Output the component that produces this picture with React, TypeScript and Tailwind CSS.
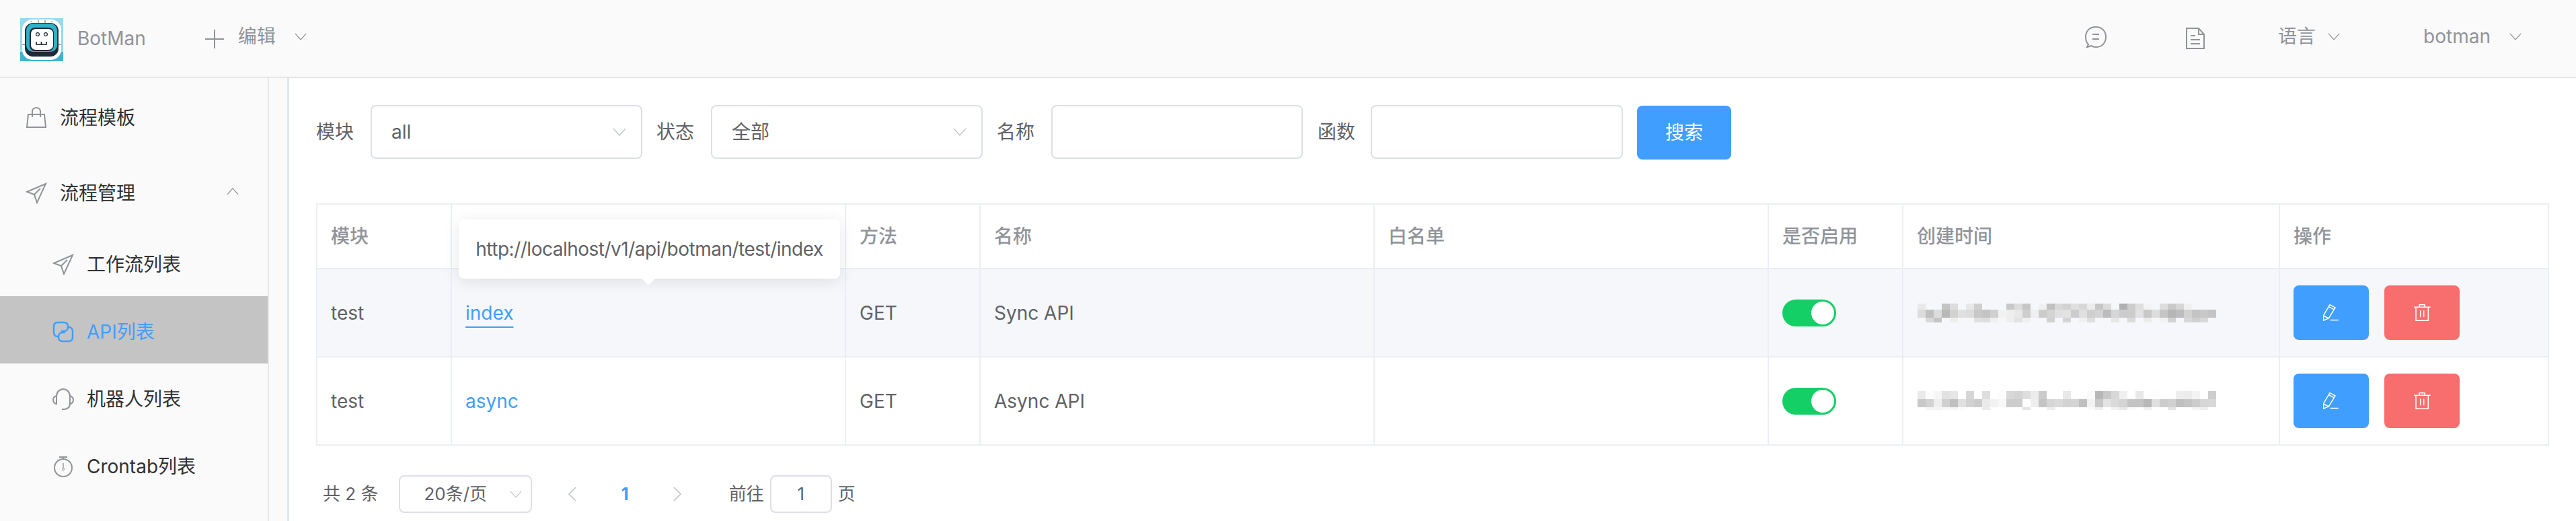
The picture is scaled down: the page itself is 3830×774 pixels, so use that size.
import type { ReactNode } from "react";

const mosaics = [
  {
    rows: [
      { y: 1, h: 9, cells: "e9 -- -- c4 dc -- e8 cf -- -- -- c9 dd c6 -- f0 c0 d8 d2 e0 d8 eb c6 dc -- b0 cc df f3 -- de c9 d6 f0 -- -- --" },
      { y: 10, h: 12, cells: "dc c0 dc b8 d2 e0 dc c8 c4 d0 f2 ee e8 ce f0 cc d4 e0 e2 cc e0 cf d4 bc d6 cc cc e2 c8 dd c6 b6 bc d2 c4 c8 c4" },
      { y: 22, h: 7, cells: "-- d8 c4 -- ee -- -- e0 de f0 -- ee e2 f0 -- -- d0 -- d4 -- f0 de -- -- e6 -- da -- ec -- f2 d2 -- d8 d0 d8 --" },
    ],
  },
  {
    rows: [
      { y: 0, h: 12, cells: "ea fd f6 e2 e6 -- d6 -- de -- fc d8 d4 de ec cb -- -- e8 -- -- fa b8 c8 d8 f0 -- e8 -- fd -- -- ee ec f4 -- cd" },
      { y: 12, h: 12, cells: "c8 d2 ee d0 c0 e0 d2 cc ea f2 f8 cc cc ff ee c4 d6 da d2 d4 c0 f2 c8 e4 da d4 c4 c4 b8 e0 cc d0 bf c4 cc d6 d8" },
      { y: 24, h: 4, cells: "-- f6 f4 f8 f6 fb -- -- ec -- -- -- -- e4 -- -- ee -- -- -- -- fa f0 -- f2 e8 fa -- f2 -- -- e4 -- -- f6 f0 --" },
    ],
  },
];

const rows = [
  { module: "test", path: "index", name: "Sync API", mosaic: 0, hovered: true },
  { module: "test", path: "async", name: "Async API", mosaic: 1, hovered: false },
];

const columns = [
  { title: "模块", width: "w-[200px]" },
  { title: "", width: "w-[586px]" },
  { title: "方法", width: "w-[200px]" },
  { title: "名称", width: "w-[586px]" },
  { title: "白名单", width: "w-[586px]" },
  { title: "是否启用", width: "w-[200px]" },
  { title: "创建时间", width: "w-[560px]" },
  { title: "操作", width: "w-[400px]" },
];

function Stroke({ size, children, className }: { size: number; children: ReactNode; className?: string }) {
  return (
    <svg
      width={size}
      height={size}
      viewBox="0 0 32 32"
      fill="none"
      stroke="currentColor"
      strokeWidth="2"
      className={`shrink-0 ${className ?? ""}`}
    >
      {children}
    </svg>
  );
}

function Chevron({ w = 18, up = false, className }: { w?: number; up?: boolean; className?: string }) {
  return (
    <svg width={w} height={w * 0.6} viewBox="0 0 20 12" fill="none" stroke="currentColor" strokeWidth="1.4" className={`shrink-0 ${className ?? ""}`}>
      <polyline points={up ? "1,11 10,1 19,11" : "1,1 10,11 19,1"} />
    </svg>
  );
}

function BagIcon() {
  return (
    <Stroke size={32}>
      <path d="M4 11h24l2 19H2z" />
      <path d="M10 15V6a6 5 0 0 1 12 0v9" />
    </Stroke>
  );
}

function SendIcon() {
  return (
    <Stroke size={32}>
      <path d="M30 2L2 14l11 4 4 12z" />
      <path d="M22 9l-9 9" />
    </Stroke>
  );
}

function LinkIcon() {
  return (
    <Stroke size={32}>
      <path d="M8 23c-4 0-6-3-6-6V8c0-4 2-6 6-6h9c4 0 6 2 6 6v1c0 3-2 6-6 6h-4" strokeWidth="2.5" />
      <path d="M24 9c4 0 6 3 6 6v9c0 4-2 6-6 6h-9c-4 0-6-2-6-6v-1c0-3 2-6 6-6h4" strokeWidth="2.5" />
    </Stroke>
  );
}

function HeadsetIcon() {
  return (
    <Stroke size={32}>
      <path d="M6 12C6 6 10 1 16 1s10 5 10 11" />
      <path d="M6 11c-3 1-5 3-5 6s2 6 5 6z" />
      <path d="M26 11c3 1 5 3 5 6s-2 6-5 6z" />
      <path d="M26 23c0 5-4 8-9 8h-3" />
    </Stroke>
  );
}

function WatchIcon() {
  return (
    <Stroke size={32}>
      <circle cx="16" cy="18" r="13" />
      <path d="M10 2h12M16 2v3" />
      <path d="M16 11v7" strokeWidth="1.4" />
      <circle cx="16" cy="20" r="1.6" strokeWidth="1" />
    </Stroke>
  );
}

function Logo() {
  return (
    <svg width="64" height="64" viewBox="0 0 64 64" className="mt-1 shrink-0">
      <rect width="64" height="50" fill="#93dcef" />
      <rect y="50" width="64" height="14" fill="#3fb2cf" />
      <rect x="3" y="2" width="58" height="60" rx="15" fill="#fff" />
      <path d="M3 39h58" stroke="#1f2937" strokeWidth="0.8" />
      <path d="M27 3v4M37 3v4" stroke="#374151" strokeWidth="0.8" />
      <circle cx="17" cy="5" r="1" fill="#67c9df" />
      <circle cx="47" cy="5" r="1" fill="#67c9df" />
      <rect x="7" y="7" width="50" height="50" rx="12" fill="#1f2937" />
      <rect x="9" y="8" width="46" height="42" rx="10" fill="#2fb2c9" />
      <rect x="14" y="14" width="36" height="35" rx="8" fill="#1f2937" />
      <rect x="16" y="16" width="33" height="31" rx="7" fill="#fff" />
      <circle cx="26" cy="24" r="2.4" fill="#fff" stroke="#1f2937" strokeWidth="1.2" />
      <circle cx="38" cy="24" r="2.4" fill="#fff" stroke="#1f2937" strokeWidth="1.2" />
      <path d="M24 35v4h15v-4M31.5 35v4" fill="none" stroke="#111827" strokeWidth="1.6" />
    </svg>
  );
}

function Mosaic({ index }: { index: number }) {
  return (
    <svg width="444" height="30" className="ml-px block">
      {mosaics[index].rows.map((row) =>
        row.cells.split(" ").map((cell, col) =>
          cell === "--" ? null : (
            <rect key={`${row.y}-${col}`} x={col * 12} y={row.y} width="12" height={row.h} fill={`#${cell}${cell}${cell}`} />
          ),
        ),
      )}
    </svg>
  );
}

function Select({ value, className }: { value: string; className: string }) {
  return (
    <div className={`flex items-center justify-between rounded-lg border-2 border-[#dcdfe6] bg-white ${className}`}>
      <span>{value}</span>
      <Chevron w={20} className="text-[#c0c4cc]" />
    </div>
  );
}

function MenuItem({ icon, label, active }: { icon: ReactNode; label: string; active?: boolean }) {
  return (
    <div
      className={`flex h-[100px] items-center gap-[19px] pl-[78px] pt-[6px] ${active ? "bg-[#c4c4c4] text-[#409eff]" : "text-[#303133]"}`}
    >
      <span className={active ? "text-[#409eff]" : "text-[#909399]"}>{icon}</span>
      <span>{label}</span>
    </div>
  );
}

export default function App() {
  return (
    <div className="flex h-[774px] w-[3830px] flex-col overflow-hidden bg-white text-[28px] leading-[40px] [font-family:Inter,'Noto_Sans_CJK_SC',sans-serif]">
      <header className="flex h-[116px] shrink-0 items-center border-b-2 border-[#e6e6e6] bg-[#fafafa] pl-[30px] pr-[81px] text-[#909399]">
        <Logo />
        <span className="ml-[21px]">BotMan</span>
        <div className="mb-[6px] ml-[86px] flex items-center">
          <Stroke size={32} className="mt-[8px]">
            <path d="M16 2v28M2 16h28" />
          </Stroke>
          <span className="ml-[19px]">编辑</span>
          <Chevron className="ml-7" />
        </div>
        <div className="mb-[6px] ml-auto flex items-center">
          <Stroke size={32} className="mt-[2px]">
            <path d="M5 27C2 24 1 20 1 16 1 7 7 1 16 1s15 6 15 15-6 15-15 15c-3 0-5-1-7-2-2 1-4 1.500-6 2z" />
            <path d="M11 12h10M11 19h10" />
          </Stroke>
          <Stroke size={32} className="ml-[116px] mt-[6px]">
            <path d="M3 1h18l8 9v21H3z" />
            <path d="M21 1v9h8M9 12h7M9 18h14M9 24h14" />
          </Stroke>
          <span className="ml-[107px]">语言</span>
          <Chevron className="ml-[18px]" />
          <span className="ml-[124px]">botman</span>
          <Chevron className="ml-7" />
        </div>
      </header>

      <div className="flex min-h-0 flex-1">
        <aside className="w-[400px] shrink-0 border-r-2 border-[#e6e6e6] bg-[#fafafa] pt-[3px] text-[#303133]">
          <div className="flex h-[112px] items-center gap-[19px] pl-[38px]">
            <span className="text-[#909399]">
              <BagIcon />
            </span>
            <span>流程模板</span>
          </div>
          <div className="flex h-[109px] items-center gap-[19px] pl-[38px] pt-[3px]">
            <span className="text-[#909399]">
              <SendIcon />
            </span>
            <span>流程管理</span>
            <Chevron up className="mb-[6px] ml-[117px] text-[#909399]" />
          </div>
          <MenuItem icon={<SendIcon />} label="工作流列表" />
          <MenuItem icon={<LinkIcon />} label="API列表" active />
          <MenuItem icon={<HeadsetIcon />} label="机器人列表" />
          <MenuItem icon={<WatchIcon />} label="Crontab列表" />
        </aside>
        <div className="w-[27px] shrink-0 bg-[#fafafa]" />

        <main className="min-w-0 flex-1 border-l-[3px] border-[#dfe6ec] pl-10 pr-10 pt-10 text-[#606266]">
          <div className="flex items-start">
            <div className="flex h-[80px] items-center">
              <span className="mr-[25px]">模块</span>
              <Select value="all" className="h-[80px] w-[404px] pl-[29px] pr-[22px]" />
              <span className="ml-[21px] mr-[25px]">状态</span>
              <Select value="全部" className="h-[80px] w-[404px] pl-[29px] pr-[22px]" />
              <span className="ml-[21px] mr-[25px]">名称</span>
              <input readOnly className="h-[80px] w-[374px] rounded-lg border-2 border-[#dcdfe6] bg-white" />
              <span className="ml-[22px] mr-[23px]">函数</span>
              <input readOnly className="h-[80px] w-[375px] rounded-lg border-2 border-[#dcdfe6] bg-white" />
            </div>
            <button className="ml-[21px] mt-px h-[80px] w-[140px] rounded-lg bg-[#409eff] text-white">搜索</button>
          </div>

          <table className="mt-[65px] w-[3320px] table-fixed border-separate border-spacing-0 border-l-2 border-t-2 border-[#ebeef5]">
            <colgroup>
              {columns.map((col, i) => (
                <col key={i} className={col.width} />
              ))}
            </colgroup>
            <thead>
              <tr className="h-[96px]">
                {columns.map((col, i) => (
                  <th
                    key={i}
                    className="border-b-2 border-r-2 border-[#ebeef5] pl-5 text-left font-medium text-[#909399]"
                  >
                    {col.title}
                  </th>
                ))}
              </tr>
            </thead>
            <tbody>
              {rows.map((row) => (
                <tr key={row.path} className={`h-[131px] ${row.hovered ? "bg-[#f5f7fa]" : ""}`}>
                  <td className="border-b-2 border-r-2 border-[#ebeef5] pl-5">{row.module}</td>
                  <td className="relative border-b-2 border-r-2 border-[#ebeef5] pl-5 text-[#409eff]">
                    {row.hovered && (
                      <div className="absolute left-[10px] top-[-74px] z-10 flex h-[88px] w-[567px] items-center justify-center rounded-lg bg-white tracking-[-0.5px] text-[#606266] shadow-[0_4px_24px_rgba(0,0,0,0.1)]">
                        http://localhost/v1/api/botman/test/index
                        <span className="absolute left-[272px] top-[88px] border-x-[10px] border-t-[10px] border-x-transparent border-t-white" />
                      </div>
                    )}
                    <span className={row.hovered ? "underline decoration-2 underline-offset-[10px]" : ""}>{row.path}</span>
                  </td>
                  <td className="border-b-2 border-r-2 border-[#ebeef5] pl-5">GET</td>
                  <td className="border-b-2 border-r-2 border-[#ebeef5] pl-5">{row.name}</td>
                  <td className="border-b-2 border-r-2 border-[#ebeef5] pl-5" />
                  <td className="border-b-2 border-r-2 border-[#ebeef5] pl-5">
                    <div className="flex h-10 w-20 items-center justify-end rounded-full bg-[#14cf66] p-[3px]">
                      <div className="h-[34px] w-[34px] rounded-full bg-white" />
                    </div>
                  </td>
                  <td className="border-b-2 border-r-2 border-[#ebeef5] pl-5">
                    <Mosaic index={row.mosaic} />
                  </td>
                  <td className="border-b-2 border-r-2 border-[#ebeef5] pl-5">
                    <div className="flex gap-[23px]">
                      <button className="flex h-[81px] w-[112px] items-center justify-center rounded-lg bg-[#409eff]">
                        <svg width="24" height="25" viewBox="0 0 24 25" fill="none" stroke="#fff" strokeWidth="1.5">
                          <path d="M10 .7l8 4.3L8.300 21 .8 24 .3 17z" />
                          <path d="M8.300 3.600l8 4.300M.3 17l8 4M10.700 23.500h12" />
                        </svg>
                      </button>
                      <button className="flex h-[81px] w-[112px] items-center justify-center rounded-lg bg-[#f86e6e]">
                        <svg width="25" height="25" viewBox="0 0 25 25" fill="none" stroke="#fff" strokeWidth="1.5">
                          <path d="M0 4.300h24.700M8 4.300V.8h8v3.500M3 4.300v20h18.300v-20M9.700 9.300v10M14.700 9.300v10" />
                        </svg>
                      </button>
                    </div>
                  </td>
                </tr>
              ))}
            </tbody>
          </table>

          <div className="ml-[10px] mt-[44px] flex h-14 items-center text-[26px]">
            <span>共 2 条</span>
            <div className="ml-[31px] flex h-14 w-[198px] items-center justify-between rounded-lg border-2 border-[#dcdfe6] pl-[35px] pr-[13px]">
              <span>20条/页</span>
              <Chevron className="text-[#c0c4cc]" />
            </div>
            <svg width="12" height="22" viewBox="0 0 12 22" fill="none" stroke="#c0c4cc" strokeWidth="1.6" className="ml-[54px]">
              <polyline points="11,1 1,11 11,21" />
            </svg>
            <span className="ml-[66px] font-bold text-[#409eff]">1</span>
            <svg width="12" height="22" viewBox="0 0 12 22" fill="none" stroke="#c0c4cc" strokeWidth="1.6" className="ml-[66px]">
              <polyline points="1,1 11,11 1,21" />
            </svg>
            <span className="ml-[71px]">前往</span>
            <div className="ml-[9px] flex h-14 w-[92px] items-center justify-center rounded-lg border-2 border-[#dcdfe6]">1</div>
            <span className="ml-[9px]">页</span>
          </div>
        </main>
      </div>
    </div>
  );
}
